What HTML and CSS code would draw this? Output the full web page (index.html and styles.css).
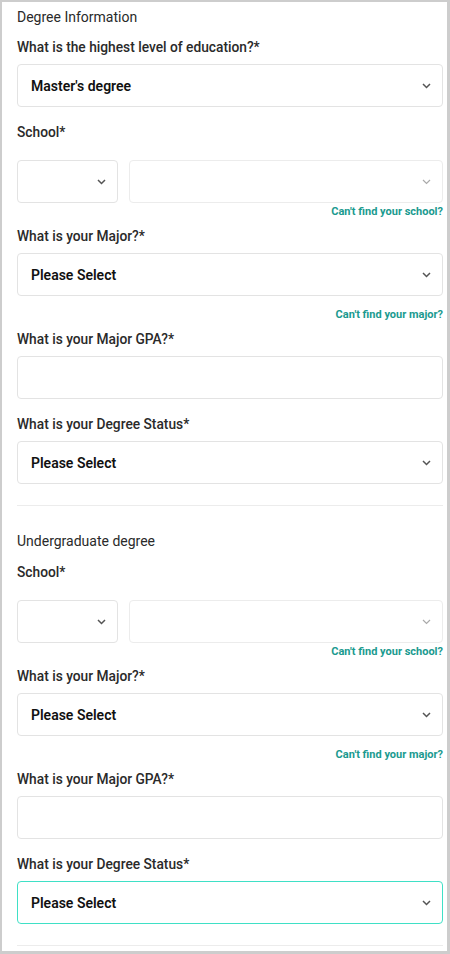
FILE: index.html
```html
<!DOCTYPE html>
<html lang="en">
<head>
<meta charset="utf-8">
<title>Degree Information</title>
<link rel="stylesheet" href="styles.css">
</head>
<body>
<div class="frame">
  <section class="section first">
    <div class="heading">Degree Information</div>
    <div class="field">
      <div class="label">What is the highest level of education?*</div>
      <div class="select"><span class="value">Master's degree</span><svg class="chev" width="9" height="6" viewBox="0 0 9 6"><polyline points="1,1 4.5,4.5 8,1"/></svg></div>
    </div>
    <div class="field">
      <div class="label school-label">School*</div>
      <div class="school-row">
        <div class="select small"><svg class="chev" width="9" height="6" viewBox="0 0 9 6"><polyline points="1,1 4.5,4.5 8,1"/></svg></div>
        <div class="select wide disabled"><svg class="chev" width="9" height="6" viewBox="0 0 9 6"><polyline points="1,1 4.5,4.5 8,1"/></svg></div>
      </div>
      <div class="link link-school">Can't find your school?</div>
    </div>
    <div class="field after-link">
      <div class="label">What is your Major?*</div>
      <div class="select"><span class="value">Please Select</span><svg class="chev" width="9" height="6" viewBox="0 0 9 6"><polyline points="1,1 4.5,4.5 8,1"/></svg></div>
      <div class="link link-major">Can't find your major?</div>
    </div>
    <div class="field after-link">
      <div class="label">What is your Major GPA?*</div>
      <div class="input"></div>
    </div>
    <div class="field">
      <div class="label">What is your Degree Status*</div>
      <div class="select"><span class="value">Please Select</span><svg class="chev" width="9" height="6" viewBox="0 0 9 6"><polyline points="1,1 4.5,4.5 8,1"/></svg></div>
    </div>
  </section>
  <hr class="divider">
  <section class="section second">
    <div class="heading">Undergraduate degree</div>
    <div class="field">
      <div class="label school-label">School*</div>
      <div class="school-row">
        <div class="select small"><svg class="chev" width="9" height="6" viewBox="0 0 9 6"><polyline points="1,1 4.5,4.5 8,1"/></svg></div>
        <div class="select wide disabled"><svg class="chev" width="9" height="6" viewBox="0 0 9 6"><polyline points="1,1 4.5,4.5 8,1"/></svg></div>
      </div>
      <div class="link link-school">Can't find your school?</div>
    </div>
    <div class="field after-link">
      <div class="label">What is your Major?*</div>
      <div class="select"><span class="value">Please Select</span><svg class="chev" width="9" height="6" viewBox="0 0 9 6"><polyline points="1,1 4.5,4.5 8,1"/></svg></div>
      <div class="link link-major">Can't find your major?</div>
    </div>
    <div class="field after-link">
      <div class="label">What is your Major GPA?*</div>
      <div class="input"></div>
    </div>
    <div class="field">
      <div class="label">What is your Degree Status*</div>
      <div class="select focused"><span class="value">Please Select</span><svg class="chev" width="9" height="6" viewBox="0 0 9 6"><polyline points="1,1 4.5,4.5 8,1"/></svg></div>
    </div>
  </section>
  <hr class="divider">
</div>
</body>
</html>
```
FILE: styles.css
```css
html, body {
  margin: 0;
  padding: 0;
}
body {
  background: #cdcdcd;
  padding: 2px 3px 0 2px;
  height: 954px;
  box-sizing: border-box;
  overflow: hidden;
  font-family: Roboto, "Liberation Sans", Arial, sans-serif;
  color: #222;
}
.frame {
  background: #fff;
  height: 949px;
  overflow: hidden;
  padding: 5px 4px 0 15px;
  box-sizing: border-box;
}
.heading {
  font-size: 14px;
  line-height: 20px;
  color: #2a2a2a;
}
.first .heading { margin-bottom: 10px; }
.second .heading { margin-bottom: 11px; }
.label {
  font-size: 13.75px;
  font-weight: 500;
  line-height: 20px;
  color: #2a2a2a;
  margin-bottom: 7px;
}
.label.school-label { margin-bottom: 18px; }
.field + .field { margin-top: 15px; }
.field + .field.after-link { margin-top: 7px; }
.select, .input {
  height: 43px;
  box-sizing: border-box;
  border: 1px solid #e3e3e3;
  border-radius: 4px;
  background: #fff;
}
.select {
  display: flex;
  align-items: center;
  padding: 0 11px 0 13px;
}
.value {
  flex: 1;
  font-size: 14px;
  font-weight: 600;
  color: #111;
}
.chev {
  margin-left: auto;
  display: block;
}
.chev polyline {
  fill: none;
  stroke: #555;
  stroke-width: 1.5;
}
.disabled .chev polyline { stroke: #aaa; stroke-width: 1.2; }
.school-row {
  display: flex;
  gap: 11px;
}
.select.small { width: 101px; flex: none; }
.select.wide { flex: 1; border-color: #ececec; }
.select.focused { border-color: #3fe0c6; }
.link {
  text-align: right;
  font-size: 11px;
  line-height: 14px;
  font-weight: 700;
  color: #1a9a8f;
}
.link-school { margin-top: 2px; }
.link-major { margin-top: 12px; }
.divider {
  border: 0;
  border-top: 1px solid #ececec;
  margin: 21px 0 0 0;
  height: 0;
}
.second { padding-top: 25px; }
```
